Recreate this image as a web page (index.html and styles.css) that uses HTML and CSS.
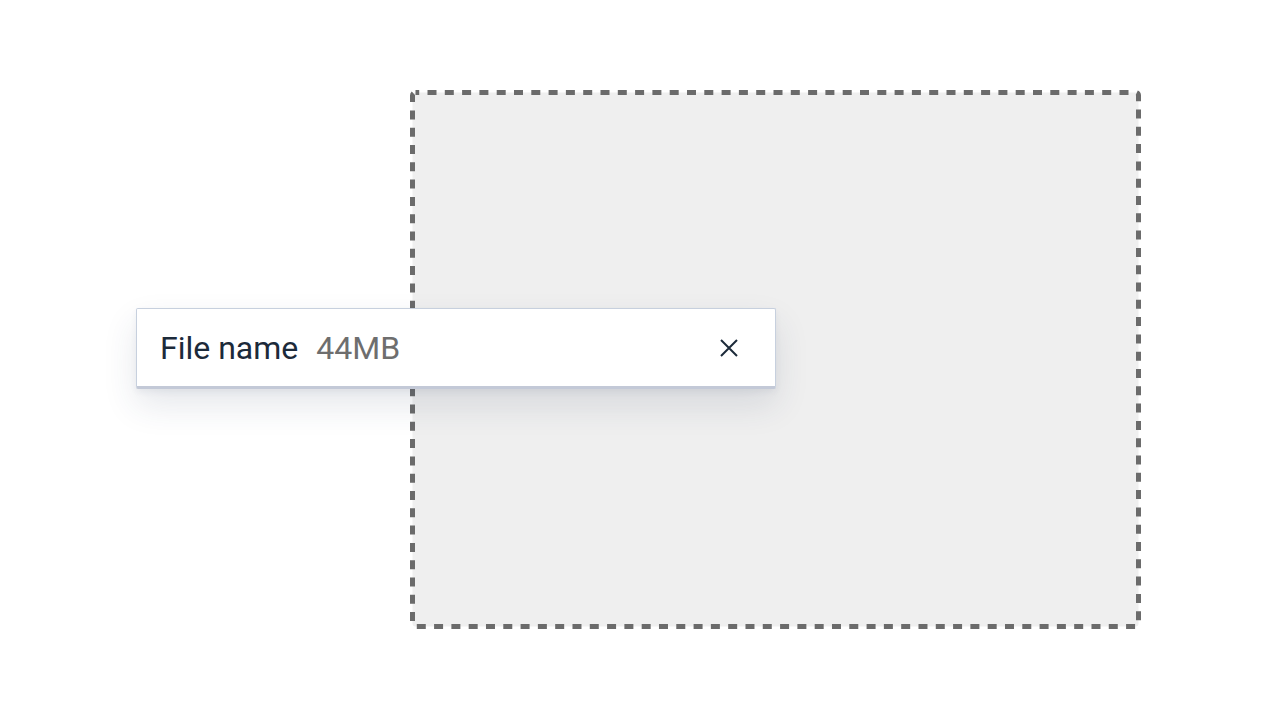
FILE: index.html
```html
<!DOCTYPE html>
<html lang="en">
<head>
<meta charset="utf-8">
<title>Upload</title>
<link rel="stylesheet" href="styles.css">
</head>
<body>
<main class="stage">
  <div class="dropzone">
    <svg class="dropzone-outline" width="731" height="539" viewBox="0 0 731 539" aria-hidden="true">
      <rect x="2.5" y="2.5" width="726" height="534" rx="3" ry="3" />
    </svg>
  </div>
  <div class="file-chip">
    <span class="file-name">File name</span>
    <span class="file-size">44MB</span>
    <button class="file-remove" type="button" aria-label="Remove file">
      <svg width="20" height="20" viewBox="0 0 20 20" aria-hidden="true">
        <path d="M2 2 L18 18 M18 2 L2 18" />
      </svg>
    </button>
  </div>
</main>
</body>
</html>
```
FILE: styles.css
```css
html, body {
  margin: 0;
  background: #ffffff;
}

.stage {
  position: relative;
  width: 1280px;
  height: 720px;
  box-sizing: border-box;
  padding: 90px 0 0 410px;
  font-family: Roboto, "Liberation Sans", sans-serif;
}

.dropzone {
  position: relative;
  width: 731px;
  height: 539px;
}

.dropzone-outline {
  display: block;
}

.dropzone-outline rect {
  fill: #efefef;
  stroke: #6b6b6b;
  stroke-width: 5;
  stroke-dasharray: 9 8.3;
  stroke-dashoffset: -12;
}

.file-chip {
  position: absolute;
  left: 136px;
  top: 308px;
  width: 640px;
  height: 81px;
  box-sizing: border-box;
  display: flex;
  align-items: center;
  padding: 0 36px 0 23px;
  background: #ffffff;
  border: 1.5px solid #c7d0de;
  border-bottom: 3px solid #c3c9d7;
  border-radius: 2px;
  box-shadow: 0 16px 34px rgba(40, 55, 90, 0.12), 0 3px 6px rgba(40, 55, 90, 0.06);
}

.file-name {
  font-size: 32px;
  line-height: 1;
  color: #1c2a3a;
}

.file-size {
  font-size: 32px;
  line-height: 1;
  color: #6e6e6e;
  margin-left: 18px;
}

.file-remove {
  margin-left: auto;
  width: 20px;
  height: 20px;
  padding: 0;
  border: 0;
  background: none;
  display: flex;
}

.file-remove path {
  stroke: #1c2a3a;
  stroke-width: 2;
  fill: none;
}
```
